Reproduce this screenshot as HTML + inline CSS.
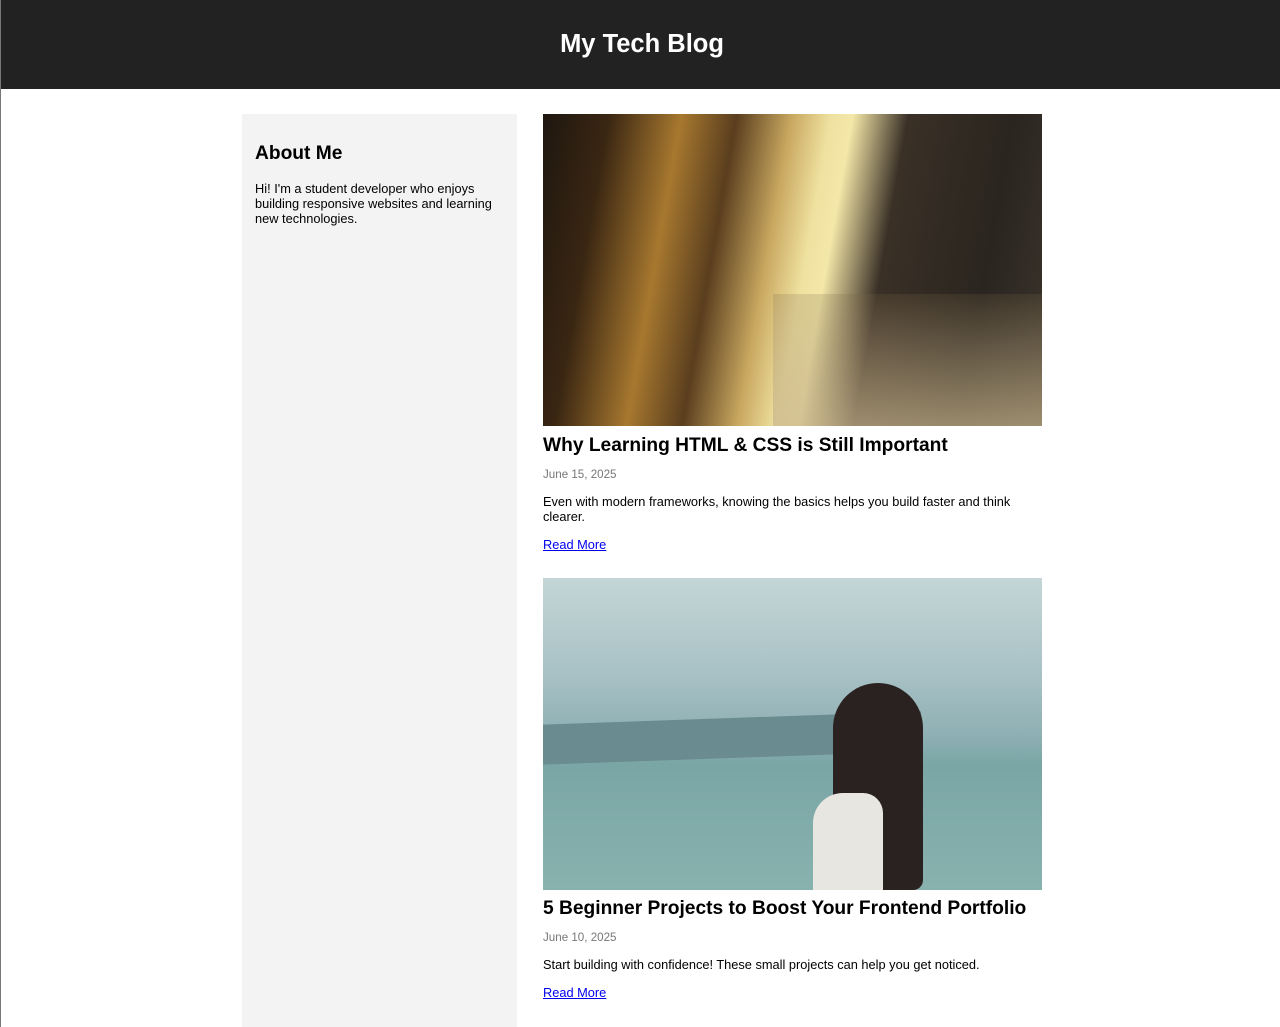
<!DOCTYPE html>
<html><head><style>
html,body{margin:0;padding:0}
body{font-family:"Liberation Sans",Arial,sans-serif;background:#fff;border-left:1px solid #777;height:1027px;box-sizing:border-box;overflow:hidden;position:relative}
header{background:#222;height:89px;color:#fff;text-align:center}
header h1{margin:0;font-size:25.5px;line-height:89px;font-weight:bold;padding-left:3px}
.side{position:absolute;left:241px;top:114px;width:275px;height:913px;background:#f3f3f3}
.side h2{position:absolute;left:13px;margin:0;font-size:19.2px}
.side p{position:absolute;left:13px;margin:0;font-size:12.8px;line-height:15px;width:250px}
.a{position:absolute;left:542px;width:499px}
.img{width:499px;height:312px;position:relative;overflow:hidden}
h3{margin:0;font-size:19.2px;position:absolute;white-space:nowrap}
.d{position:absolute;font-size:11.6px;color:#777;margin:0}
.t{position:absolute;font-size:12.8px;line-height:15px;margin:0;width:490px}
a{position:absolute;font-size:12.8px;color:#00e;text-decoration:underline}
</style></head><body>
<header><h1>My Tech Blog</h1></header>
<div class="side"><h2 style="top:29px">About Me</h2><p style="top:67px">Hi! I'm a student developer who enjoys building responsive websites and learning new technologies.</p></div>
<div class="a" style="top:114px">
<div class="img" style="background:linear-gradient(100deg,#1e1710 0%,#3a2612 12%,#a7782f 25%,#5a3e1e 35%,#c9a860 45%,#efe1a0 52%,#f4e7a8 56%,#3a3026 66%,#2a251f 85%,#3a342c 100%)"><div style="position:absolute;left:230px;top:180px;width:269px;height:132px;background:linear-gradient(180deg,rgba(120,100,70,.2),rgba(200,180,140,.7))"></div></div>
<h3 style="top:321px">Why Learning HTML &amp; CSS is Still Important</h3>
<p class="d" style="top:354px">June 15, 2025</p>
<p class="t" style="top:380px">Even with modern frameworks, knowing the basics helps you build faster and think clearer.</p>
<a style="top:423px">Read More</a>
</div>
<div class="a" style="top:578px">
<div class="img" style="background:linear-gradient(180deg,#c4d6d6 0%,#a9c2c6 30%,#8fb0b4 50%,#7aa6a6 60%,#88b2ae 100%)"><div style="position:absolute;left:0;top:140px;width:378px;height:40px;background:#6a8b90;transform:skewY(-2deg)"></div><div style="position:absolute;left:290px;top:105px;width:90px;height:207px;background:#2a2220;border-radius:45px 45px 10px 0"></div><div style="position:absolute;left:270px;top:215px;width:70px;height:97px;background:#e8e6e0;border-radius:30px 20px 0 0"></div></div>
<h3 style="top:320px">5 Beginner Projects to Boost Your Frontend Portfolio</h3>
<p class="d" style="top:353px">June 10, 2025</p>
<p class="t" style="top:379px">Start building with confidence! These small projects can help you get noticed.</p>
<a style="top:407px">Read More</a>
</div>
</body></html>
